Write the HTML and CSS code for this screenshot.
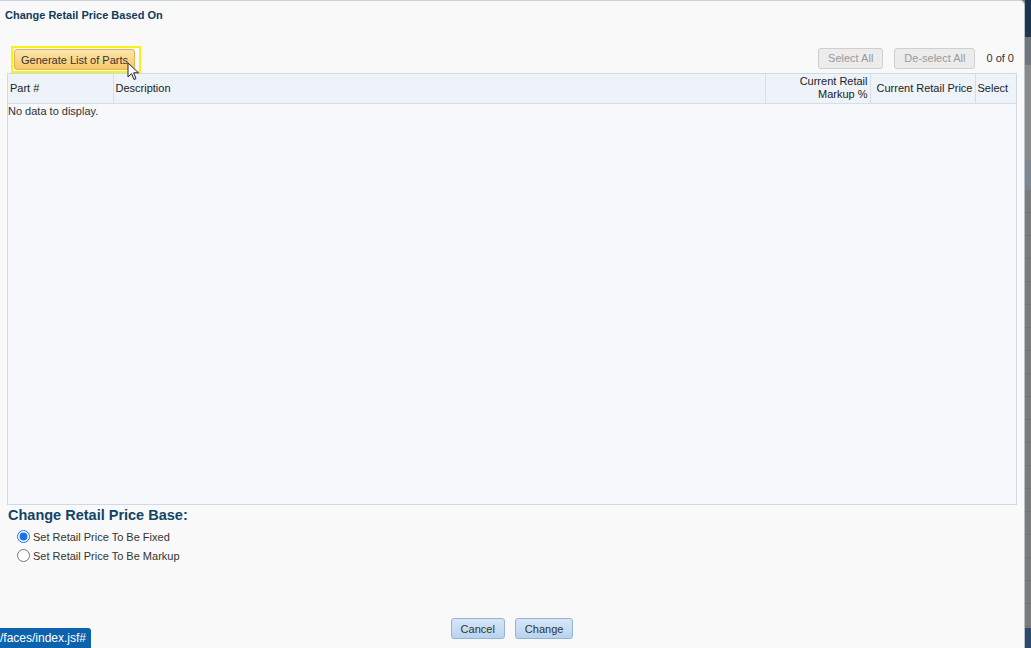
FILE: index.html
```html
<!DOCTYPE html>
<html>
	<head>
		<meta charset="UTF-8">
		<title>Change Retail Price Based On</title>
		<link rel="stylesheet" href="styles.css">
	</head>
	<body>
		<div class="page">
			<div class="dialog">
				<h1 class="dlg-title">Change Retail Price Based On</h1>

				<div class="toolbar">
					<span class="focus-ring"><button class="btn btn-orange">Generate List of Parts</button></span>
					<div class="toolbar-right">
						<button class="btn btn-grey" disabled>Select All</button>
						<button class="btn btn-grey" disabled>De-select All</button>
						<span class="count">0 of 0</span>
					</div>
				</div>

				<div class="grid">
					<table class="grid-table">
						<thead>
							<tr>
								<th class="c-part">Part #</th>
								<th class="c-desc">Description</th>
								<th class="c-markup num">Current Retail<br>Markup %</th>
								<th class="c-price">Current Retail Price</th>
								<th class="c-select">Select</th>
							</tr>
						</thead>
					</table>
					<div class="empty">No data to display.</div>
				</div>

				<h2 class="section-title">Change Retail Price Base:</h2>
				<label class="radio-row"><input type="radio" name="base" checked> Set Retail Price To Be Fixed</label>
				<label class="radio-row"><input type="radio" name="base"> Set Retail Price To Be Markup</label>

				<div class="footer">
					<button class="btn btn-blue">Cancel</button>
					<button class="btn btn-blue">Change</button>
				</div>

				<!-- mouse pointer over the generate button -->
				<svg class="cursor" width="13" height="19" viewBox="0 0 13 19">
					<path d="M1 1 L1 15 L4.5 11.5 L7 17.5 L9 16.6 L6.6 10.8 L11.5 10.8 Z" fill="#fff" stroke="#222" stroke-width="1"/>
				</svg>
			</div>

			<!-- dimmed page behind the dialog -->
			<div class="behind">
				<div class="b-nav"></div>
				<div class="b-bar"></div>
				<div class="b-light"></div>
				<div class="b-row"></div>
				<div class="b-rest"></div>
				<div class="b-foot"></div>
			</div>

			<div class="status">/faces/index.jsf#</div>
		</div>
	</body>
</html>
```

FILE: styles.css
```css
* { margin:0; padding:0; box-sizing:border-box; }
html, body { height:100%; }
body { font-family:"Liberation Sans", Arial, sans-serif; font-size:11px; color:#333; overflow:hidden; background:#7b7b7b; }

.page { display:flex; height:648px; position:relative; }

/* 대화상자 */
.dialog { width:1025px; height:648px; background:#f9f9f9; border-top:1px solid #c9d3dd; border-right:1px solid #b8c0c8; border-top-right-radius:5px; display:flex; flex-direction:column; position:relative; }
.dlg-title { font-size:11px; font-weight:bold; color:#0f3b5c; padding:8px 0 0 5px; height:45px; }

.toolbar { display:flex; justify-content:space-between; align-items:center; height:27px; padding:0 10px 0 11px; }
.focus-ring { display:inline-block; border:2px solid #f7f21a; padding:1px 4px 1px 1px; }
.toolbar-right { display:flex; align-items:center; gap:11px; padding-bottom:3px; }
.count { color:#333; }

.btn { font-family:inherit; font-size:11px; color:#333; border-radius:3px; height:21px; padding:0 9px; cursor:default; }
.btn-orange { background:linear-gradient(#fde6ad, #f8c766); border:1px solid #e0b25a; color:#333; padding:0 6px; }
.btn-grey { background:#ececec; border:1px solid #cfcfcf; color:#9a9a9a; padding:0 9px; }
.btn-blue { background:linear-gradient(#d7e7f7, #b8d3ee); border:1px solid #95b4d4; padding:0 9px; }

/* 그리드 */
.grid { margin:0 7px; height:432px; border:1px solid #cddbe8; background:#f6f8fb; }
.grid-table { width:100%; border-collapse:collapse; table-layout:fixed; }
.grid-table th { font-weight:normal; height:29px; background:#eef2f9; border-left:1px solid #d5dfeb; border-bottom:1px solid #d5dfeb; text-align:left; padding:0 2px; line-height:13px; color:#222; }
.grid-table th:first-child { border-left:none; }
.grid-table th.num { text-align:right; }
.c-part { width:105px; }
.c-markup { width:105px; }
.c-price { width:105px; text-align:right !important; }
.c-select { width:41px; }
.empty { padding:1px 0 0 0; color:#333; }

.section-title { font-size:14.5px; font-weight:bold; color:#124466; padding:2px 0 0 8px; height:22px; }
.radio-row { display:flex; align-items:center; gap:3px; padding-left:17px; height:19px; color:#333; }
.radio-row input { width:13px; height:13px; margin:0; accent-color:#1a73e8; }

.footer { display:flex; justify-content:center; gap:10px; margin-top:auto; padding-bottom:9px; }

.cursor { position:absolute; left:127px; top:61px; }

/* 뒤쪽 페이지 */
.behind { flex:1; display:flex; flex-direction:column; }
.b-nav { height:37px; background:#1e3550; }
.b-bar { height:28px; background:#6f757b; }
.b-light { height:95px; background:#8a8a8a; }
.b-row { height:30px; background:#7e8791; }
.b-rest { flex:1; background:repeating-linear-gradient(#7b7b7b 0, #7b7b7b 22px, #727272 22px, #727272 23px); }
.b-foot { height:20px; background:#2d4a6e; }

.status { position:absolute; left:0; bottom:0; height:20px; width:91px; background:#0d62ad; color:#fff; font-size:12px; line-height:20px; border-top-right-radius:3px; white-space:nowrap; overflow:hidden; }
```
